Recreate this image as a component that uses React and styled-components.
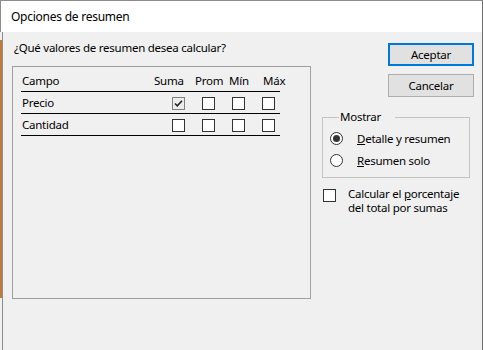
import React from 'react';
import styled, { createGlobalStyle } from 'styled-components';

const GlobalStyle = createGlobalStyle`
  html, body {
    margin: 0;
    padding: 0;
  }
  body {
    width: 483px;
    height: 350px;
    overflow: hidden;
    font-family: 'Noto Sans', 'Segoe UI', sans-serif;
    font-size: 11.5px;
    letter-spacing: -0.25px;
    color: #000;
    background: #f0f0f0;
  }
`;

const Window = styled.div`
  width: 483px;
  height: 350px;
  box-sizing: border-box;
  display: flex;
  flex-direction: column;
  border-top: 1px solid #8c8c8c;
  border-right: 1px solid #6e6e6e;
`;

const TitleBar = styled.div`
  height: 31px;
  flex-shrink: 0;
  display: flex;
  align-items: center;
  padding-left: 10px;
  font-size: 12px;
  background: #fff;
  border-left: 1px solid #8c8c8c;
`;

const Body = styled.div`
  flex: 1;
  display: flex;
  align-items: flex-start;
  padding: 8px 0 0 12px;
  /* orange edge of the window behind + our own left border */
  background:
    linear-gradient(#c27b37, #c27b37) 0 8px / 2px 258px no-repeat,
    linear-gradient(#8c8c8c, #8c8c8c) 2px 0 / 1px 100% no-repeat,
    #f0f0f0;
`;

const LeftColumn = styled.div`
  width: 299px;
  display: flex;
  flex-direction: column;
`;

const Prompt = styled.div`
  line-height: 16px;
  margin: 0 0 10px 2px;
`;

const Panel = styled.div`
  width: 299px;
  height: 233px;
  box-sizing: border-box;
  border: 1px solid #a0a0a0;
  padding: 3px 0 0 8px;
`;

const Table = styled.div`
  width: 259px;
`;

const HeaderRow = styled.div`
  display: grid;
  grid-template-columns: 133px 41px 34px 34px 1fr;
  height: 21px;
  align-items: center;
  border-bottom: 1px solid #000;
  white-space: nowrap;
`;

const DataRow = styled.div`
  display: grid;
  grid-template-columns: 151px 30px 30px 30px 1fr;
  height: 21px;
  align-items: center;
  border-bottom: 1px solid #000;
`;

const Cell = styled.span`
  padding-left: 1px;
`;

const Box = styled.span`
  display: block;
  width: 13px;
  height: 13px;
  box-sizing: border-box;
  border: 1px solid #333;
  background: #fff;
  margin-top: 1px;
`;

const RightColumn = styled.div`
  width: 152px;
  margin-left: 11px;
  padding-top: 3px;
  display: flex;
  flex-direction: column;
`;

const Button = styled.button`
  align-self: flex-end;
  width: 86px;
  height: 23px;
  box-sizing: border-box;
  margin: ${p => (p.$primary ? '0' : '8px 0 0')};
  padding: 0;
  font: inherit;
  letter-spacing: inherit;
  color: #000;
  background: #e1e1e1;
  border: ${p => (p.$primary ? '2px solid #0078d7' : '1px solid #adadad')};
`;

const Group = styled.fieldset`
  margin: 12px 0 0;
  width: 148px;
  box-sizing: border-box;
  border: 1px solid #c4c4c4;
  padding: 2px 0 6px 7px;
`;

const Legend = styled.legend`
  margin-left: 9px;
  padding: 0 14px 0 1px;
  line-height: 16px;
`;

const RadioRow = styled.div`
  display: flex;
  align-items: center;
  height: 22px;
  gap: 14px;
`;

const Radio = styled.span`
  width: 13px;
  height: 13px;
  box-sizing: border-box;
  border-radius: 50%;
  border: 1px solid #333;
  background: #fff;
  display: flex;
  align-items: center;
  justify-content: center;

  &::after {
    content: '';
    width: 7px;
    height: 7px;
    border-radius: 50%;
    background: ${p => (p.$checked ? '#333' : 'transparent')};
  }
`;

const CheckOption = styled.div`
  display: flex;
  align-items: flex-start;
  gap: 12px;
  margin: 10px 0 0 1px;
`;

const CheckLabel = styled.div`
  line-height: 13.5px;
  margin-top: -1px;
`;

const CheckedFocusBox = () => (
  <svg width="13" height="13" viewBox="0 0 13 13" style={{ display: 'block', marginTop: 1 }}>
    <rect x="0.5" y="0.5" width="12" height="12" fill="#ececec" stroke="#111" strokeDasharray="1 1" />
    <path d="M3 6.5 L5.3 8.8 L10 3.8" fill="none" stroke="#222" strokeWidth="1.6" />
  </svg>
);

const rows = [
  { name: 'Precio', checks: [true, false, false, false] },
  { name: 'Cantidad', checks: [false, false, false, false] },
];

export default function App() {
  return (
    <Window>
      <GlobalStyle />
      <TitleBar>Opciones de resumen</TitleBar>
      <Body>
        <LeftColumn>
          <Prompt>¿Qué valores de resumen desea calcular?</Prompt>
          <Panel>
            <Table>
              <HeaderRow>
                <Cell>Campo</Cell>
                <span>Suma</span>
                <span>Prom</span>
                <span>Mín</span>
                <span>Máx</span>
              </HeaderRow>
              {rows.map(row => (
                <DataRow key={row.name}>
                  <Cell>{row.name}</Cell>
                  {row.checks.map((on, i) =>
                    on ? <CheckedFocusBox key={i} /> : <Box key={i} />
                  )}
                </DataRow>
              ))}
            </Table>
          </Panel>
        </LeftColumn>
        <RightColumn>
          <Button $primary>Aceptar</Button>
          <Button>Cancelar</Button>
          <Group>
            <Legend>Mostrar</Legend>
            <RadioRow>
              <Radio $checked />
              <span><u>D</u>etalle y resumen</span>
            </RadioRow>
            <RadioRow>
              <Radio />
              <span><u>R</u>esumen solo</span>
            </RadioRow>
          </Group>
          <CheckOption>
            <Box />
            <CheckLabel>
              Calcular el <u>p</u>orcentaje<br />del total por sumas
            </CheckLabel>
          </CheckOption>
        </RightColumn>
      </Body>
    </Window>
  );
}
